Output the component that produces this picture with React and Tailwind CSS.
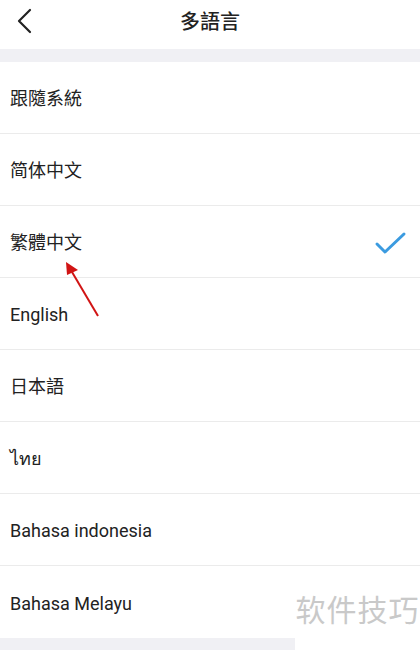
const languages = [
  { name: "跟隨系統" },
  { name: "简体中文" },
  { name: "繁體中文", selected: true },
  { name: "English" },
  { name: "日本語" },
  { name: "ไทย" },
  { name: "Bahasa indonesia" },
  { name: "Bahasa Melayu" },
];

export default function App() {
  return (
    <div
      className="relative w-[420px] h-[650px] overflow-hidden bg-white text-[#222]"
      style={{ fontFamily: 'Roboto, "Noto Sans CJK TC", "Noto Sans", sans-serif' }}
    >
      {/* header */}
      <div className="relative flex items-center justify-center h-[49px]">
        <button className="absolute left-[14px] top-[8px]">
          <svg width="20" height="26" viewBox="0 0 20 26">
            <path d="M16 2 L5 13 L16 24" fill="none" stroke="#222" strokeWidth="2.2" strokeLinecap="round" strokeLinejoin="round" />
          </svg>
        </button>
        <h1 className="text-[20px] font-medium -mt-[6px]">多語言</h1>
      </div>
      <div className="h-[13px] bg-[#f0f0f4]" />

      <ul>
        {languages.map((lang) => (
          <li
            key={lang.name}
            className="flex items-center justify-between h-[72px] px-[10px] pt-[2px] border-b border-[#ebebeb] last:border-b-0"
          >
            <span className="text-[18px]">{lang.name}</span>
            {lang.selected && (
              <svg width="34" height="26" viewBox="0 0 34 26" className="mr-[2px]">
                <path
                  d="M3 14 L11 22 L30 4"
                  fill="none"
                  stroke="#3b9be0"
                  strokeWidth="3"
                  strokeLinecap="round"
                  strokeLinejoin="round"
                />
              </svg>
            )}
          </li>
        ))}
      </ul>
      <div className="h-[12px] bg-[#f0f0f4]" />

      {/* red annotation arrow */}
      <svg className="absolute left-[58px] top-[258px]" width="50" height="64" viewBox="0 0 50 64">
        <line x1="40" y1="58" x2="14" y2="14" stroke="#d11414" strokeWidth="2" />
        <polygon points="8,4 20,12 9,17" fill="#d11414" />
      </svg>

      {/* watermark */}
      <div className="absolute right-0 bottom-0 w-[125px] h-[52px] bg-white flex items-start justify-center">
        <span className="text-[30px] text-[#c9c9c9] tracking-[1px] leading-none -mt-[2px]">软件技巧</span>
      </div>
    </div>
  );
}
